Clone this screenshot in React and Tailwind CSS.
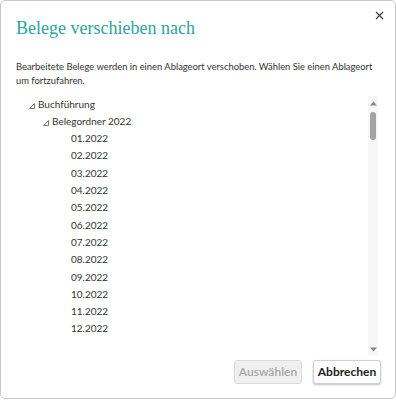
import React from "react";

const months = ["01.2022","02.2022","03.2022","04.2022","05.2022","06.2022","07.2022","08.2022","09.2022","10.2022","11.2022","12.2022"];

function Tri() {
  return (
    <svg width="6" height="6" viewBox="0 0 6 6" className="mr-[3px] mt-[2px]">
      <path d="M5.5 0.5 L5.5 5.5 L0.5 5.5 Z" fill="none" stroke="#666" strokeWidth="0.9" />
    </svg>
  );
}

export default function App() {
  return (
    <div className="w-[396px] h-[400px] bg-white">
      <div className="relative w-[396px] h-[399px] border border-[#c9c9c9] rounded-[5px] bg-white flex flex-col" style={{ fontFamily: 'Lato, "Noto Sans", sans-serif' }}>
        <button className="absolute right-[10px] top-[8px] w-[12px] h-[12px] flex items-center justify-center">
          <svg width="9" height="9" viewBox="0 0 9 9">
            <path d="M1 1 L8 8 M8 1 L1 8" stroke="#444" strokeWidth="1.3" />
          </svg>
        </button>
        <div className="pl-[15px] pt-[15px] text-[18px] leading-[24px] text-[#2aa5a0]" style={{ fontFamily: '"Liberation Serif", serif' }}>
          Belege verschieben nach
        </div>
        <div className="pl-[15px] mt-[20px] text-[9.4px] leading-[14px] text-[#333] whitespace-nowrap">
          Bearbeitete Belege werden in einen Ablageort verschoben. Wählen Sie einen Ablageort
          <br />
          um fortzufahren.
        </div>
        <div className="flex mt-[8px] ml-[28px] mr-[17px] h-[260px]">
          <div className="flex-1 text-[10px] text-[#333]">
            <div className="h-[17px] flex items-center"><Tri /><span>Buchführung</span></div>
            <div className="h-[17px] flex items-center pl-[14px]"><Tri /><span>Belegordner 2022</span></div>
            {months.map((m) => (
              <div key={m} className="h-[17.3px] flex items-center pl-[42px]">{m}</div>
            ))}
          </div>
          <div className="w-[10px] bg-[#f7f7f7] flex flex-col items-center">
            <svg width="7" height="5" viewBox="0 0 7 5" className="mt-[5px]"><path d="M0 4.5 L3.5 0.5 L7 4.5 Z" fill="#888" /></svg>
            <div className="mt-[6px] w-[6px] h-[28px] rounded-[3px] bg-[#a3a3a3]" />
            <div className="flex-1" />
            <svg width="7" height="5" viewBox="0 0 7 5" className="mb-[4px]"><path d="M0 0.5 L3.5 4.5 L7 0.5 Z" fill="#888" /></svg>
          </div>
        </div>
        <div className="flex justify-end gap-[11px] mr-[14px] mt-[4px]" style={{ fontFamily: 'Lato, sans-serif' }}>
          <button className="w-[68px] h-[24px] rounded-[3px] border border-[#dcdcdc] bg-[#efefef] text-[12px] font-semibold text-[#a6a6a6]">Auswählen</button>
          <button className="w-[68px] h-[24px] rounded-[3px] border border-[#cfcfcf] bg-white text-[12px] font-bold text-[#222] shadow-[0_1px_2px_rgba(0,0,0,0.25)]">Abbrechen</button>
        </div>
      </div>
    </div>
  );
}
